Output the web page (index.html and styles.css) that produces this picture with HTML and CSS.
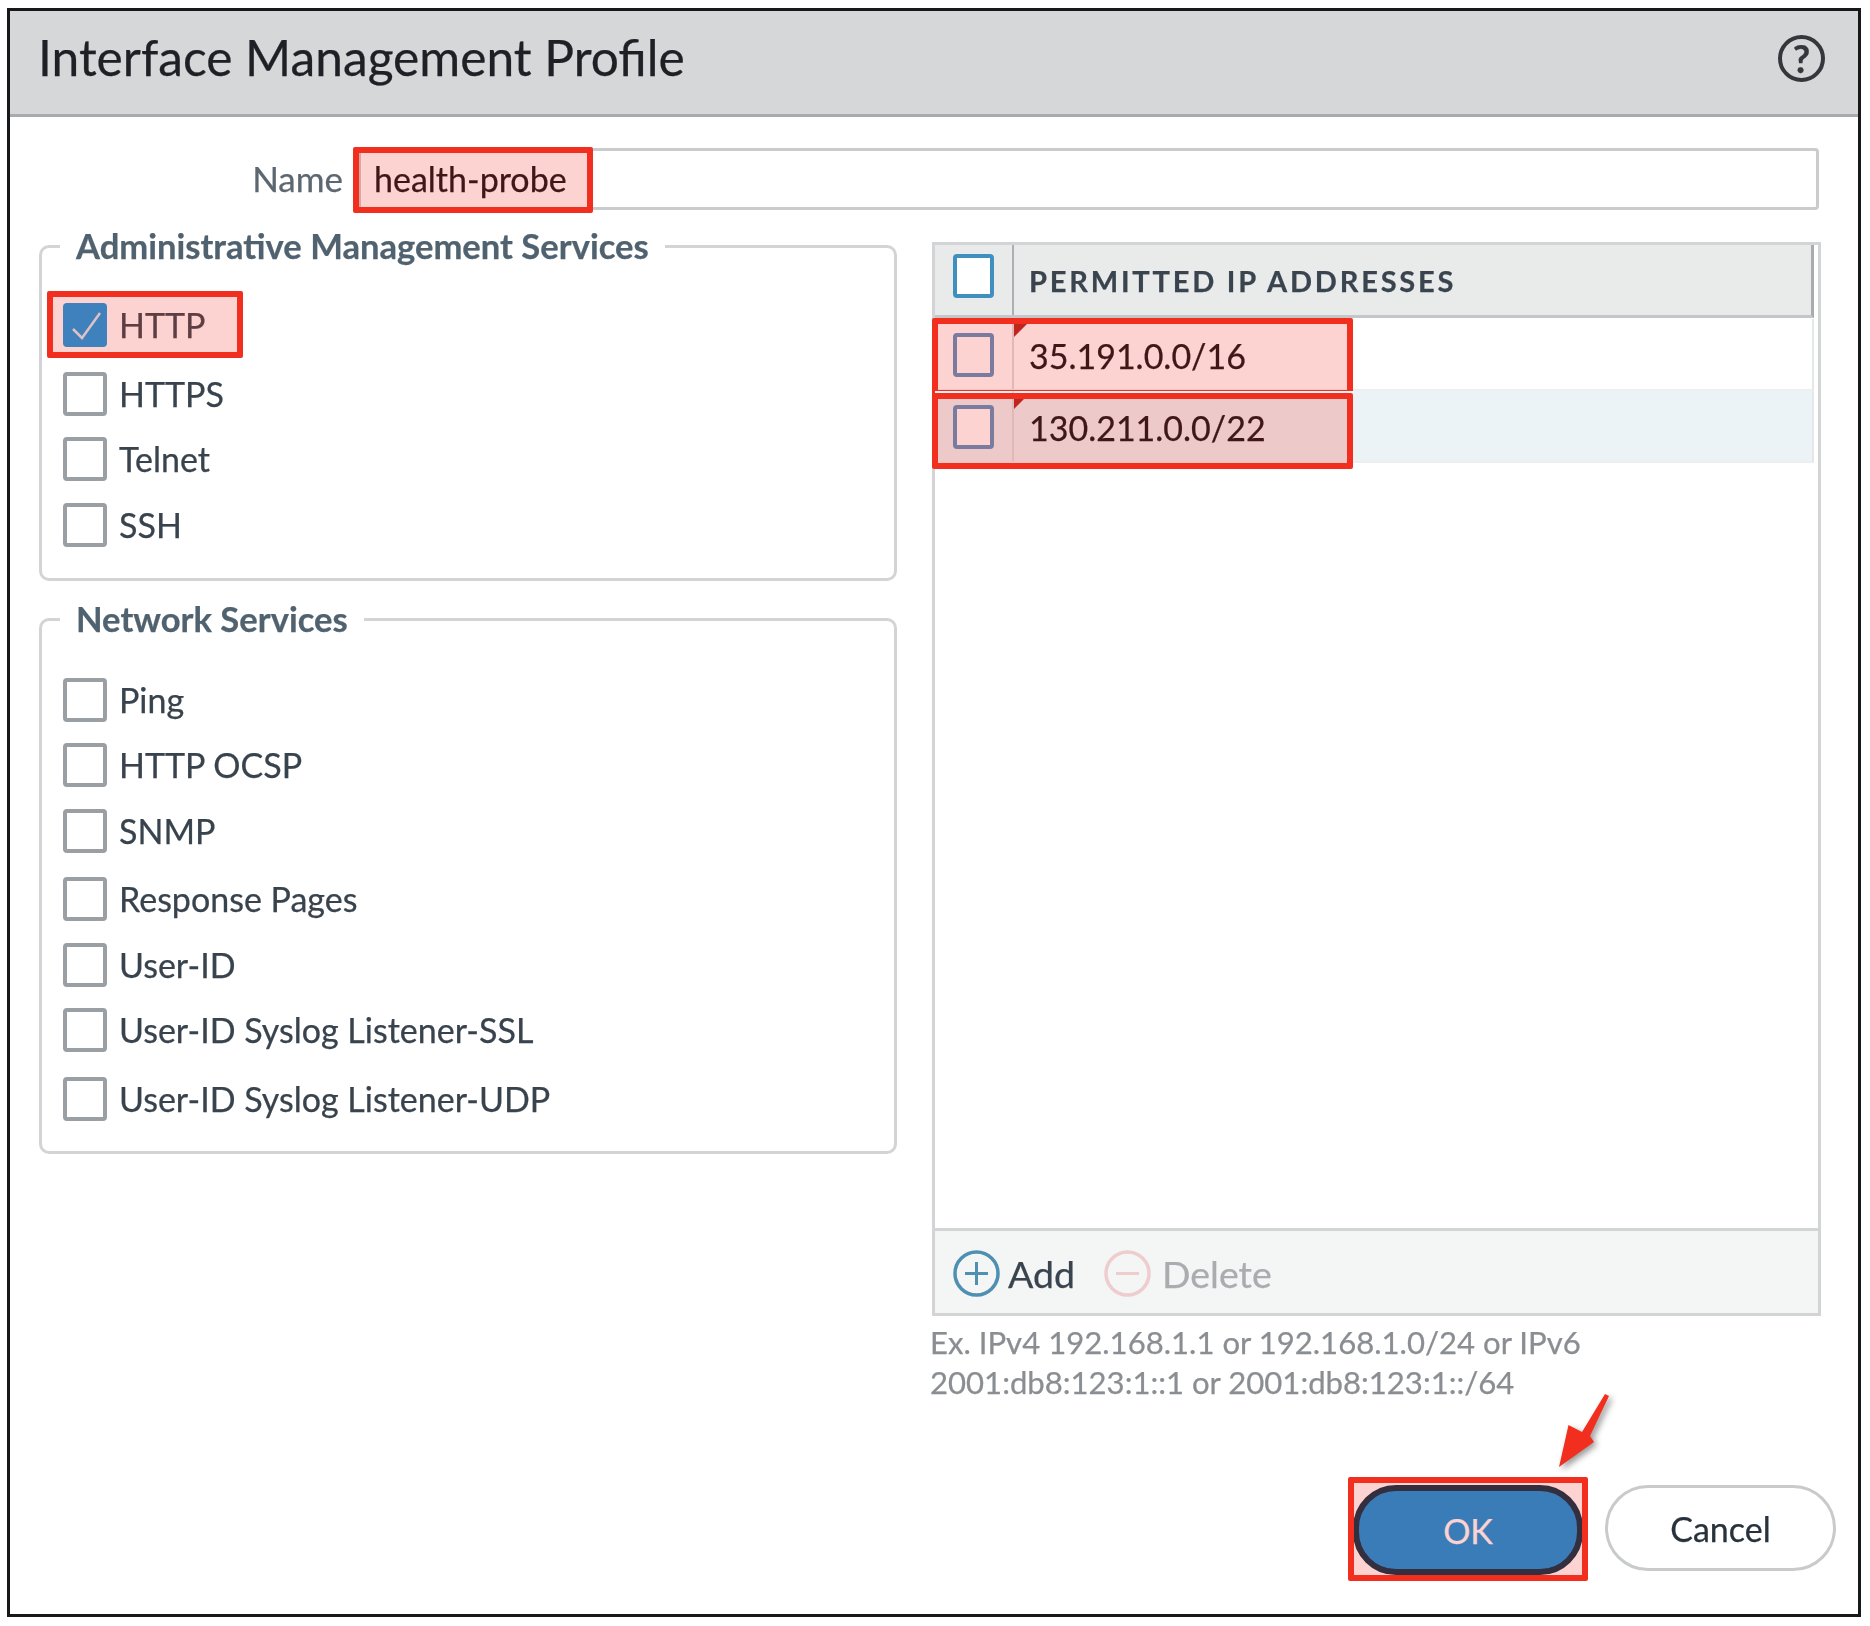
FILE: index.html
```html
<!DOCTYPE html>
<html lang="en">
  <head>
    <meta charset="UTF-8" />
    <title>Interface Management Profile</title>
    <link rel="stylesheet" href="styles.css">
  </head>
  <body>
    <div class="dialog">
      <header class="dialog-head">
        <h1>Interface Management Profile</h1>
        <span class="help">?</span>
      </header>

      <div class="dialog-body">
        <div class="name-row">
          <label>Name</label>
          <div class="name-input">
            <span>health-probe</span>
            <div class="mark mark-name"></div>
          </div>
        </div>

        <div class="columns">
          <div class="left-col">
            <fieldset class="group group-admin">
              <legend>Administrative Management Services</legend>
              <div class="svc h69">
                <span class="box checked">
                  <svg viewBox="0 0 44 44" width="44" height="44"><path d="M10 26l9 9 18-25" fill="none" stroke="#dbe8f2" stroke-width="2.5" /></svg>
                </span>
                <span>HTTP</span>
                <div class="mark mark-http"></div>
              </div>
              <div class="svc"><span class="box"></span><span>HTTPS</span></div>
              <div class="svc h66"><span class="box"></span><span>Telnet</span></div>
              <div class="svc"><span class="box"></span><span>SSH</span></div>
            </fieldset>

            <fieldset class="group group-net">
              <legend>Network Services</legend>
              <div class="svc"><span class="box"></span><span>Ping</span></div>
              <div class="svc h66"><span class="box"></span><span>HTTP OCSP</span></div>
              <div class="svc h68"><span class="box"></span><span>SNMP</span></div>
              <div class="svc h66"><span class="box"></span><span>Response Pages</span></div>
              <div class="svc"><span class="box"></span><span>User-ID</span></div>
              <div class="svc h69"><span class="box"></span><span>User-ID Syslog Listener-SSL</span></div>
              <div class="svc"><span class="box"></span><span>User-ID Syslog Listener-UDP</span></div>
            </fieldset>
          </div>

          <div class="right-col">
            <div class="ip-table">
              <div class="ip-head">
                <div class="cell-check"><span class="box blue"></span></div>
                <div class="cell-text">PERMITTED IP ADDRESSES</div>
              </div>
              <div class="ip-row">
                <div class="cell-check"><span class="box slate"></span></div>
                <div class="cell-text"><i class="flag"></i>35.191.0.0/16</div>
                <div class="mark mark-ip1"></div>
              </div>
              <div class="ip-row alt">
                <div class="cell-check"><span class="box slate"></span></div>
                <div class="cell-text"><i class="flag"></i>130.211.0.0/22</div>
                <div class="mark mark-ip2"></div>
              </div>
              <div class="ip-space"></div>
              <div class="ip-foot">
                <svg class="tool-icon" viewBox="0 0 47 47" width="47" height="47">
                  <circle cx="23.5" cy="23.5" r="21.5" fill="none" stroke="#4f8fb2" stroke-width="3.5" />
                  <path d="M23.5 12v23M12 23.5h23" fill="none" stroke="#4f8fb2" stroke-width="3" />
                </svg>
                <span class="tool">Add</span>
                <svg class="tool-icon second" viewBox="0 0 47 47" width="47" height="47">
                  <circle cx="23.5" cy="23.5" r="21.5" fill="none" stroke="#efcdcf" stroke-width="3.5" />
                  <path d="M12 23.5h23" fill="none" stroke="#efcdcf" stroke-width="3" />
                </svg>
                <span class="tool off">Delete</span>
              </div>
            </div>
            <p class="hint">Ex. IPv4 192.168.1.1 or 192.168.1.0/24 or IPv6<br />2001:db8:123:1::1 or 2001:db8:123:1::/64</p>
          </div>
        </div>

        <div class="actions">
          <div class="ok-wrap">
            <button class="btn btn-ok">OK</button>
            <div class="mark mark-ok"></div>
            <svg class="arrow" viewBox="0 0 70 90" width="70" height="90">
              <path d="M55 4L59 6 40 46 44 52 9 77 18.5 35 32 42z" fill="#f22f1f" />
            </svg>
          </div>
          <button class="btn btn-cancel">Cancel</button>
        </div>
      </div>
    </div>
  </body>
</html>
```

FILE: styles.css
```css
* {
  box-sizing: border-box;
}
body {
  margin: 0;
  background: #fff;
  font-family: Lato, "Open Sans", sans-serif;
  color: #3a444e;
  -webkit-text-stroke: 0.25px;
}
.dialog {
  width: 1854px;
  height: 1609px;
  margin: 8px 0 0 7px;
  border: 3px solid #16181a;
  overflow: hidden;
  filter: blur(0.5px);
}
.dialog-head {
  height: 106px;
  padding: 0 33px 0 28px;
  background: #d6d7d9;
  border-bottom: 3px solid #a7abae;
  display: flex;
  align-items: center;
  justify-content: space-between;
}
.dialog-head h1 {
  margin: 0 0 11px;
  font-size: 49.7px;
  font-weight: 400;
  color: #1d2125;
}
.help {
  width: 47px;
  height: 47px;
  margin-bottom: 9px;
  border: 4px solid #34383c;
  border-radius: 50%;
  display: flex;
  align-items: center;
  justify-content: center;
  font-size: 38px;
  line-height: 1;
  font-weight: 700;
  color: #34383c;
}
.dialog-body {
  padding: 31px 37px 0 29px;
}
.name-row {
  display: flex;
  align-items: center;
  height: 62px;
}
.name-row label {
  width: 304px;
  padding-bottom: 2px;
  text-align: right;
  font-size: 35px;
  color: #5c6770;
}
.name-input {
  position: relative;
  flex: 1;
  height: 62px;
  margin-left: 15px;
  margin-right: 2px;
  padding-left: 13px;
  padding-bottom: 2px;
  border: 3px solid #c9cbcd;
  border-radius: 4px;
  display: flex;
  align-items: center;
  font-size: 34px;
  color: #0e1114;
}
.columns {
  display: grid;
  grid-template-columns: 858px 889px;
  column-gap: 35px;
  margin-top: 14px;
}
.group {
  margin: 0;
  padding: 0 0 0 21px;
  border: 3px solid #d2d4d6;
  border-radius: 10px;
}
.group legend {
  margin-left: -3px;
  padding: 0 16px;
  height: 44px;
  line-height: 44px;
  font-size: 34.6px;
  font-weight: 700;
  color: #50626f;
}
.group-admin {
  height: 357px;
  padding-top: 35px;
}
.group-net {
  height: 557px;
  margin-top: 16px;
  padding-top: 37px;
}
.svc {
  position: relative;
  height: 65px;
  display: flex;
  align-items: flex-start;
  gap: 12px;
  font-size: 34px;
  line-height: 43px;
  color: #38434d;
}
.h66 {
  height: 66px;
}
.h68 {
  height: 68px;
}
.h69 {
  height: 69px;
}
.box {
  display: block;
  flex: none;
  width: 44px;
  height: 44px;
  border: 4px solid #9a9fa3;
  border-radius: 4px;
  background: #fff;
}
.box.checked {
  border: 0;
  background: #0f98e6;
  border-radius: 4px;
}
.box.checked svg {
  display: block;
}
.box.blue {
  width: 41px;
  border-color: #3f90bf;
}
.box.slate {
  width: 41px;
  border-color: #5a90c0;
}
.mark {
  position: absolute;
  border: 6px solid #f22f1f;
  border-radius: 2px;
  background: rgba(242, 47, 31, 0.21);
}
.mark-name {
  left: -8px;
  top: -4px;
  width: 240px;
  height: 66px;
}
.mark-http {
  left: -16px;
  top: -12px;
  width: 196px;
  height: 67px;
}
.right-col {
  padding-top: 18px;
}
.ip-table {
  height: 1074px;
  border: 3px solid #d2d4d6;
  display: flex;
  flex-direction: column;
}
.ip-head {
  height: 73px;
  margin-right: 4px;
  display: flex;
  background: #e9ebeb;
  border-bottom: 3px solid #c4c7c9;
  border-right: 3px solid #a8acae;
}
.cell-check {
  width: 79px;
  flex: none;
  padding-top: 9px;
  padding-left: 18px;
  border-right: 2px solid #aab0b3;
}
.cell-text {
  position: relative;
  flex: 1;
  padding-left: 15px;
  display: flex;
  align-items: center;
  font-size: 34px;
  color: #0e1114;
}
.ip-head .cell-text {
  font-size: 29px;
  font-weight: 700;
  letter-spacing: 2.8px;
  color: #3a444e;
}
.ip-row {
  position: relative;
  height: 72px;
  margin-right: 4px;
  display: flex;
  border-right: 2px solid #e4e6e7;
  border-bottom: 2px solid #eceeef;
}
.ip-row:nth-child(2) {
  margin-top: 1px;
}
.ip-row .cell-check {
  padding-top: 14px;
  border-right-color: #dcdee0;
}
.ip-row .cell-text {
  padding-top: 2px;
}
.ip-row.alt {
  background: #ecf3f6;
}
.mark-ip1 {
  left: -3px;
  top: -1px;
  width: 421px;
  height: 78px;
}
.mark-ip2 {
  left: -3px;
  top: 2px;
  width: 421px;
  height: 76px;
}
.flag {
  position: absolute;
  left: 0;
  top: 3px;
  border-top: 15px solid #b5241c;
  border-right: 15px solid transparent;
}
.ip-space {
  flex: 1;
}
.ip-foot {
  height: 85px;
  background: #f4f6f5;
  border-top: 3px solid #d2d4d6;
  padding-left: 18px;
  padding-top: 3px;
  display: flex;
  align-items: center;
  font-size: 37.5px;
}
.tool {
  margin-left: 8px;
  color: #3a444e;
}
.tool.off {
  margin-left: 11px;
  color: #a9adb0;
}
.tool-icon.second {
  margin-left: 29px;
}
.hint {
  margin: 6px 0 0 -2px;
  font-size: 31.1px;
  line-height: 40px;
  color: #8a8e92;
}
.actions {
  display: flex;
  justify-content: flex-end;
  align-items: flex-start;
  gap: 22px;
  margin-top: 83px;
  margin-right: -15px;
}
.ok-wrap {
  position: relative;
}
.btn {
  display: block;
  font-family: inherit;
  font-size: 34px;
  border-radius: 43px;
  padding: 0;
}
.btn-ok {
  width: 230px;
  height: 90px;
  background: #0a91e1;
  border: 6px solid #003047;
  color: #fff;
}
.btn-cancel {
  width: 231px;
  height: 86px;
  background: #fff;
  border: 3px solid #c8cacc;
  color: #27323c;
}
.mark-ok {
  left: -5px;
  top: -8px;
  width: 240px;
  height: 104px;
}
.arrow {
  position: absolute;
  left: 197px;
  top: -95px;
  filter: drop-shadow(3px 3px 3px rgba(0, 0, 0, 0.4));
}
```
